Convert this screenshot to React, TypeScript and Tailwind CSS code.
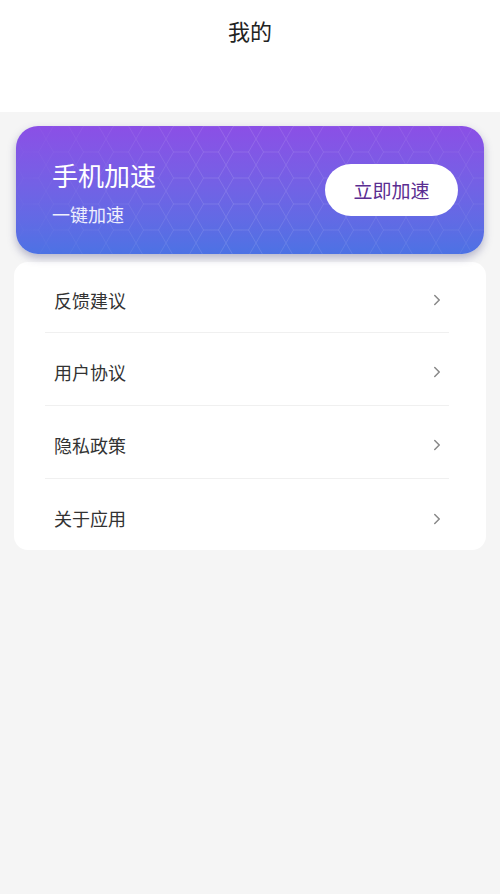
import { ChevronRight } from "lucide-react";

const menuItems = ["反馈建议", "用户协议", "隐私政策", "关于应用"];

const font = "font-['Noto_Sans_CJK_SC','Noto_Sans',sans-serif]";

const rowClasses = [
  "h-[71px] pt-[6px] border-b border-[#f0f0f0]",
  "h-[73px] pt-[6px] border-b border-[#f0f0f0]",
  "h-[73px] pt-[6px] border-b border-[#f0f0f0]",
  "h-[71px] pt-[8px]",
];

function HexPattern() {
  return (
    <svg className="absolute inset-0 h-full w-full" aria-hidden="true">
      <defs>
        <pattern id="hex" width="30" height="26" patternUnits="userSpaceOnUse">
          <path
            d="M7.5 0 L22.5 0 L30 13 L22.5 26 L7.5 26 L0 13 Z"
            fill="none"
            stroke="rgba(255,255,255,0.12)"
            strokeWidth="1"
          />
        </pattern>
        <linearGradient id="fade" x1="0" x2="1" y1="0" y2="0">
          <stop offset="0" stopColor="white" stopOpacity="0.15" />
          <stop offset="0.45" stopColor="white" stopOpacity="1" />
          <stop offset="1" stopColor="white" stopOpacity="0.5" />
        </linearGradient>
        <mask id="m">
          <rect width="100%" height="100%" fill="url(#fade)" />
        </mask>
      </defs>
      <rect width="100%" height="100%" fill="url(#hex)" mask="url(#m)" />
    </svg>
  );
}

export default function App() {
  return (
    <div className={`min-h-[894px] w-full bg-[#f5f5f5] ${font}`}>
      <header className="flex h-[112px] justify-center bg-white pt-[14px]">
        <h1 className="text-[22px] leading-[32px] text-[#222]">我的</h1>
      </header>

      <div className="px-4 pt-[14px]">
        <div className="relative flex h-[128px] items-center justify-between overflow-hidden rounded-[22px] bg-gradient-to-b from-[#8b4fe6] to-[#4c72e4] pl-9 pr-[26px] shadow-[0_4px_8px_rgba(60,60,120,0.35)]">
          <HexPattern />
          <div className="relative mt-[4px] text-white">
            <p className="text-[26px] leading-[34px]">手机加速</p>
            <p className="mt-[10px] text-[18px] leading-[24px] text-white/90">一键加速</p>
          </div>
          <button className="relative h-[52px] w-[133px] rounded-full bg-white text-[19px] text-[#5a2d91]">
            立即加速
          </button>
        </div>
      </div>

      <div className="mx-[14px] mt-[8px] rounded-[14px] bg-white pl-[31px] pr-[37px]">
        {menuItems.map((item, i) => (
          <div
            key={item}
            className={`flex items-center justify-between pl-[9px] pr-[3px] ${rowClasses[i]}`}
          >
            <span className="text-[18px] text-[#333]">{item}</span>
            <ChevronRight className="h-[18px] w-[18px] text-[#888]" strokeWidth={2} />
          </div>
        ))}
      </div>
    </div>
  );
}
